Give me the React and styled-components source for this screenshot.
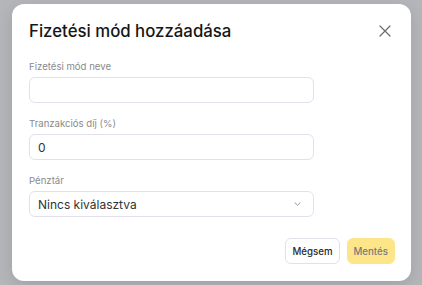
import React from 'react';
import styled, { createGlobalStyle } from 'styled-components';

const GlobalStyle = createGlobalStyle`
  html, body {
    margin: 0;
    padding: 0;
    background: #b4b6b9;
    font-family: Inter, "Noto Sans", sans-serif;
  }
`;

export default function App() {
  return (
    <>
      <GlobalStyle />
      <Overlay>
        <Modal>
          <Header>
            <Title>Fizetési mód hozzáadása</Title>
            <CloseButton aria-label="Bezárás">
              <svg width="12" height="12" viewBox="0 0 12 12" fill="none">
                <path d="M1 1L11 11M11 1L1 11" stroke="#6b6b6b" strokeWidth="1.2" strokeLinecap="round" />
              </svg>
            </CloseButton>
          </Header>
          <Form>
            <Field>
              <Label htmlFor="name">Fizetési mód neve</Label>
              <Input id="name" defaultValue="" />
            </Field>
            <Field>
              <Label htmlFor="fee">Tranzakciós díj (%)</Label>
              <Input id="fee" defaultValue="0" />
            </Field>
            <Field>
              <Label>Pénztár</Label>
              <Select>
                <span>Nincs kiválasztva</span>
                <svg width="7" height="4" viewBox="0 0 7 4" fill="none">
                  <path d="M1 0.8L3.5 3.2L6 0.8" stroke="#888" strokeWidth="0.9" strokeLinecap="round" strokeLinejoin="round" />
                </svg>
              </Select>
            </Field>
          </Form>
          <Footer>
            <Button>Mégsem</Button>
            <Button $primary>Mentés</Button>
          </Footer>
        </Modal>
      </Overlay>
    </>
  );
}

const Overlay = styled.div`
  width: 422px;
  height: 285px;
  padding: 4px 0 0 12px;
  box-sizing: border-box;
`;

const Modal = styled.div`
  width: 399px;
  height: 277px;
  box-sizing: border-box;
  background: #ffffff;
  border-radius: 12px;
  box-shadow: 0 4px 16px rgba(0, 0, 0, 0.12);
  padding: 16px 16px 17px 17px;
  display: flex;
  flex-direction: column;
`;

const Header = styled.div`
  display: flex;
  align-items: center;
  justify-content: space-between;
  height: 22px;
`;

const Title = styled.h2`
  margin: 0;
  font-size: 16.8px;
  line-height: 22px;
  font-weight: 500;
  color: #161616;
`;

const CloseButton = styled.button`
  border: none;
  background: none;
  padding: 0;
  margin-right: 4px;
  display: flex;
  cursor: pointer;
`;

const Form = styled.div`
  display: flex;
  flex-direction: column;
  gap: 15px;
  margin-top: 19px;
  width: 285px;
`;

const Field = styled.div`
  display: flex;
  flex-direction: column;
  gap: 4px;
`;

const Label = styled.label`
  font-size: 9.6px;
  line-height: 12px;
  color: #8a8a8a;
`;

const Input = styled.input`
  height: 26px;
  box-sizing: border-box;
  border: 1px solid #e2e0ee;
  border-radius: 6px;
  padding: 0 8px;
  font-family: inherit;
  font-size: 12px;
  color: #333;
  outline: none;
`;

const Select = styled.div`
  height: 26px;
  box-sizing: border-box;
  border: 1px solid #e2e0ee;
  border-radius: 6px;
  padding: 0 12px 0 8px;
  display: flex;
  align-items: center;
  justify-content: space-between;
  font-size: 12px;
  color: #333;
`;

const Footer = styled.div`
  margin-top: auto;
  display: flex;
  justify-content: flex-end;
  gap: 7px;
`;

const Button = styled.button`
  height: 26px;
  padding: 0 6px;
  border-radius: 6px;
  font-family: inherit;
  font-size: 9.7px;
  font-weight: 500;
  border: 1px solid ${({ $primary }) => ($primary ? '#fde68a' : '#e2e0ee')};
  background: ${({ $primary }) => ($primary ? '#fde68a' : '#ffffff')};
  color: ${({ $primary }) => ($primary ? '#7a7a7a' : '#2a2a2a')};
  cursor: pointer;
`;
